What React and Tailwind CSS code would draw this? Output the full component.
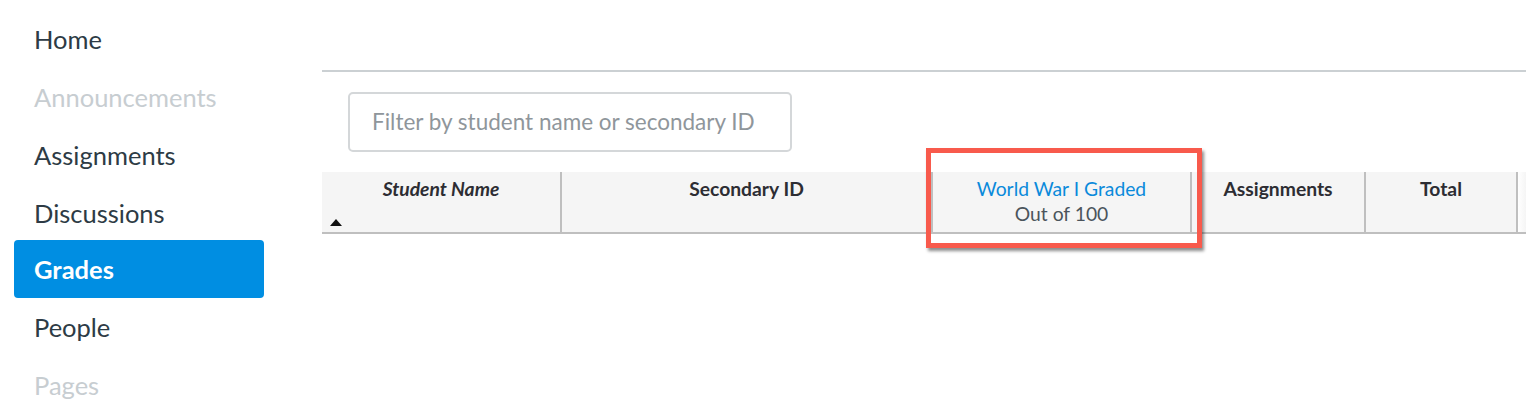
import React from "react";

const font = { fontFamily: "Lato, 'Noto Sans', sans-serif" };

function NavItem({ label, muted, active }) {
  if (active) {
    return (
      <div className="h-[58px] -mt-[2px] mb-[2px] ml-[14px] w-[250px] rounded-[4px] bg-[#008EE2] flex items-center pl-[20px] text-white font-bold text-[25.5px]">
        {label}
      </div>
    );
  }
  return (
    <div
      className={`h-[58px] flex items-center pl-[34px] text-[25.5px] ${
        muted ? "text-[#C7CDD1]" : "text-[#2D3B45]"
      }`}
    >
      {label}
    </div>
  );
}

export default function App() {
  return (
    <div className="w-[1526px] h-[412px] overflow-hidden bg-white flex" style={font}>
      <div className="w-[322px] shrink-0 pt-[10px]">
        <NavItem label="Home" />
        <NavItem label="Announcements" muted />
        <NavItem label="Assignments" />
        <NavItem label="Discussions" />
        <NavItem label="Grades" active />
        <div className="-mt-[2px]">
          <NavItem label="People" />
          <NavItem label="Pages" muted />
        </div>
      </div>
      <div className="flex-1 min-w-0">
        <div className="h-[70px]" />
        <div className="h-[2px] bg-[#CBD0D3]" />
        <div className="pt-[20px] pl-[26px]">
          <div className="w-[444px] h-[60px] border-[2px] border-[#D4D7D9] rounded-[5px] flex items-center pl-[22px] text-[22.5px] text-[#8F969B]">
            Filter by student name or secondary ID
          </div>
        </div>
        <div className="mt-[20px] relative">
          <div className="flex h-[62px] bg-[#F5F5F5] border-b-[2px] border-[#BFBFBF] text-[19.3px] text-[#2D2D33]">
            <div className="w-[238px] shrink-0 relative flex justify-center pt-[4px] leading-[25px] font-bold italic">
              Student Name
              <svg className="absolute left-[8px] top-[47px]" width="12" height="7" viewBox="0 0 12 7">
                <polygon points="6,0 12,7 0,7" fill="#111" />
              </svg>
            </div>
            <div className="w-[2px] shrink-0 bg-[#BFBFBF]" />
            <div className="w-[369px] shrink-0 flex justify-center pt-[4px] leading-[25px] font-bold">
              Secondary ID
            </div>
            <div className="w-[2px] shrink-0 bg-[#BFBFBF]" />
            <div className="w-[257px] shrink-0 flex flex-col items-center pt-[4px] leading-[25px]">
              <span className="text-[#0A8ADB]">World War I Graded</span>
              <span className="text-[#4B545C]">Out of 100</span>
            </div>
            <div className="w-[2px] shrink-0 bg-[#BFBFBF]" />
            <div className="w-[172px] shrink-0 flex justify-center pt-[4px] leading-[25px] font-bold">
              Assignments
            </div>
            <div className="w-[2px] shrink-0 bg-[#BFBFBF]" />
            <div className="w-[150px] shrink-0 flex justify-center pt-[4px] leading-[25px] font-bold">
              Total
            </div>
            <div className="w-[2px] shrink-0 bg-[#BFBFBF]" />
            <div className="flex-1 bg-gradient-to-r from-white to-[#F5F5F5]" />
          </div>
          <div className="absolute left-[604px] top-[-24px] w-[276px] h-[100px] border-[5px] border-[#F85A4C] shadow-[2px_3px_3px_rgba(0,0,0,0.45)] pointer-events-none" />
        </div>
      </div>
    </div>
  );
}
